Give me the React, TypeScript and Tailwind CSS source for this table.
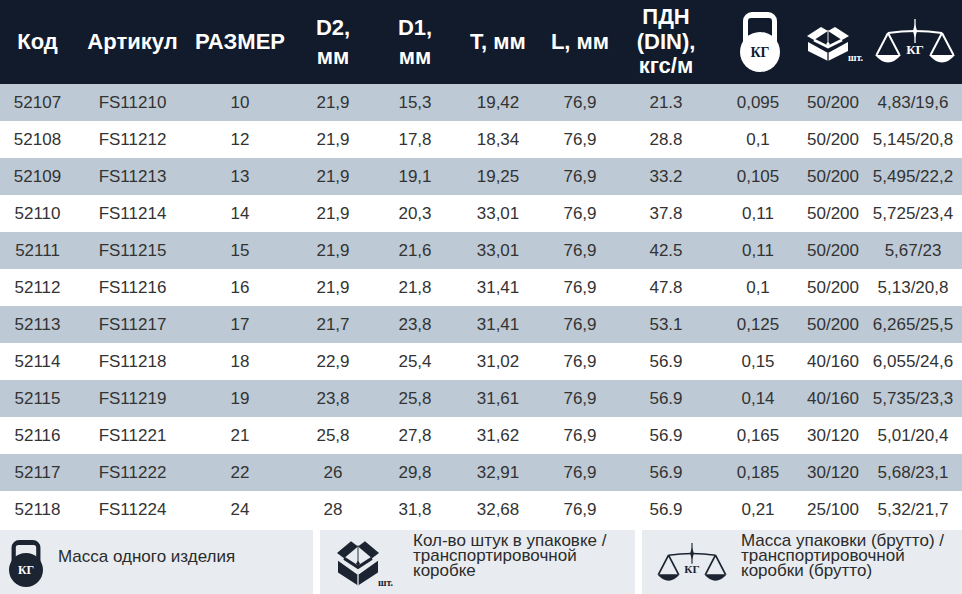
import React from "react";

const rows = [
  ["52107", "FS11210", "10", "21,9", "15,3", "19,42", "76,9", "21.3", "0,095", "50/200", "4,83/19,6"],
  ["52108", "FS11212", "12", "21,9", "17,8", "18,34", "76,9", "28.8", "0,1", "50/200", "5,145/20,8"],
  ["52109", "FS11213", "13", "21,9", "19,1", "19,25", "76,9", "33.2", "0,105", "50/200", "5,495/22,2"],
  ["52110", "FS11214", "14", "21,9", "20,3", "33,01", "76,9", "37.8", "0,11", "50/200", "5,725/23,4"],
  ["52111", "FS11215", "15", "21,9", "21,6", "33,01", "76,9", "42.5", "0,11", "50/200", "5,67/23"],
  ["52112", "FS11216", "16", "21,9", "21,8", "31,41", "76,9", "47.8", "0,1", "50/200", "5,13/20,8"],
  ["52113", "FS11217", "17", "21,7", "23,8", "31,41", "76,9", "53.1", "0,125", "50/200", "6,265/25,5"],
  ["52114", "FS11218", "18", "22,9", "25,4", "31,02", "76,9", "56.9", "0,15", "40/160", "6,055/24,6"],
  ["52115", "FS11219", "19", "23,8", "25,8", "31,61", "76,9", "56.9", "0,14", "40/160", "5,735/23,3"],
  ["52116", "FS11221", "21", "25,8", "27,8", "31,62", "76,9", "56.9", "0,165", "30/120", "5,01/20,4"],
  ["52117", "FS11222", "22", "26", "29,8", "32,91", "76,9", "56.9", "0,185", "30/120", "5,68/23,1"],
  ["52118", "FS11224", "24", "28", "31,8", "32,68", "76,9", "56.9", "0,21", "25/100", "5,32/21,7"],
];

const widths = ["w-[75px]", "w-[115px]", "w-[100px]", "w-[86px]", "w-[78px]", "w-[88px]", "w-[76px]", "w-[96px]", "w-[88px]", "w-[62px]", "w-[98px]"];

const serif = "'Liberation Serif', 'Times New Roman', serif";

function Kettle({ w, h, color, ink }: { w: number; h: number; color: string; ink: string }) {
  const H = (40 * h) / w;
  const cy = H - 20;
  return (
    <svg width={w} height={h} viewBox={`0 0 40 ${H}`}>
      <path
        fillRule="evenodd"
        fill={color}
        d={`M12 0 H28 A9 9 0 0 1 37 9 V${cy} H3 V9 A9 9 0 0 1 12 0 Z M11 6 A3 3 0 0 0 8 9 V${cy - 6} H32 V9 A3 3 0 0 0 29 6 Z`}
      />
      <circle cx="20" cy={cy} r="20" fill={color} />
      <text x="20" y={cy + 5} textAnchor="middle" fontFamily={serif} fontWeight="bold" fontSize="14" fill={ink}>
        КГ
      </text>
    </svg>
  );
}

// open carton with the "шт." mark; sy stretches the carton only
function Box({ w, sy, color, gap }: { w: number; sy: number; color: string; gap: string }) {
  const H = 35 * sy + 1;
  return (
    <svg width={w} height={(w * H) / 56} viewBox={`0 0 56 ${H}`}>
      <g transform={`scale(1 ${sy})`}>
        <polygon points="0,10 14,1 21,5 7,14" fill={color} />
        <polygon points="28,1 42,10 35,14 21,5" fill={color} />
        <polygon points="1,16 21,27 41,16 41,25 21,35 1,25" fill={color} />
        <line x1="21" y1="27" x2="21" y2="35" stroke={gap} strokeWidth="1.3" />
        <path d="M7 14 L21 21 L35 14" fill="none" stroke={color} strokeWidth="2.6" />
        <line x1="21" y1="4" x2="21" y2="17" stroke={color} strokeWidth="0.9" />
        <polygon points="21,16 23,18 21,20 19,18" fill={color} />
      </g>
      <text x="41" y={H - 1} fontFamily={serif} fontWeight="bold" fontSize="10" fill={color}>
        шт.
      </text>
    </svg>
  );
}

function Scale({ w, h, color }: { w: number; h: number; color: string }) {
  return (
    <svg width={w} height={h} viewBox="0 0 80 46">
      <path d="M13 14 Q40 10 67 14" fill="none" stroke={color} strokeWidth="1.8" />
      <line x1="40" y1="0" x2="40" y2="24" stroke={color} strokeWidth="1.3" />
      <polygon points="40,5 42.2,12 40,19 37.8,12" fill={color} />
      <path d="M13 14 L1.5 36 M13 14 L24.5 36" stroke={color} strokeWidth="2" fill="none" />
      <path d="M0 36 Q13 51 26 36 Z" fill={color} />
      <path d="M67 14 L55.5 36 M67 14 L78.5 36" stroke={color} strokeWidth="2" fill="none" />
      <path d="M54 36 Q67 51 80 36 Z" fill={color} />
      <text x="40" y="35" textAnchor="middle" fontFamily={serif} fontWeight="bold" fontSize="13" fill={color}>
        КГ
      </text>
    </svg>
  );
}

export default function App() {
  const dark = "#111b2b";
  const ink = "#1c2431";

  return (
    <div className="w-[962px] h-[594px] overflow-hidden bg-white font-['Liberation_Sans',Arial,sans-serif]">
      <table className="w-[962px] table-fixed border-collapse">
        <colgroup>
          {widths.map((w) => (
            <col key={w} className={w} />
          ))}
        </colgroup>
        <thead>
          <tr className="h-[84px] bg-[#111b2b] text-white text-[22px] font-bold">
            <th className="p-0 text-center align-middle leading-[24px]">Код</th>
            <th className="p-0 text-center align-middle leading-[24px]">Артикул</th>
            <th className="p-0 text-center align-middle leading-[24px] whitespace-nowrap">РАЗМЕР</th>
            <th className="p-0 text-center align-middle leading-[29px]">
              D2,
              <br />
              мм
            </th>
            <th className="p-0 text-center align-middle leading-[29px]">
              D1,
              <br />
              мм
            </th>
            <th className="p-0 text-center align-middle leading-[24px] whitespace-nowrap">T, мм</th>
            <th className="p-0 text-center align-middle leading-[24px] whitespace-nowrap">L, мм</th>
            <th className="p-0 text-center align-middle leading-[24.5px]">
              ПДН
              <br />
              (DIN),
              <br />
              кгс/м
            </th>
            <th className="p-0 align-middle">
              <div className="flex justify-center pl-[4px]">
                <Kettle w={40} h={60} color="#ffffff" ink={dark} />
              </div>
            </th>
            <th className="p-0 align-middle">
              <div className="flex justify-start pl-[5px] pt-[4px]">
                <Box w={56} sy={1} color="#ffffff" gap={dark} />
              </div>
            </th>
            <th className="p-0 align-middle">
              <div className="flex justify-start pl-[11px]">
                <Scale w={80} h={46} color="#ffffff" />
              </div>
            </th>
          </tr>
        </thead>
        <tbody>
          {rows.map((r, i) => (
            <tr key={r[0]} className={`h-[37px] text-[17px] text-[#333333] ${i % 2 === 0 ? "bg-[#bdc9d4]" : "bg-white"}`}>
              {r.map((c, j) => (
                <td key={j} className="p-0 text-center align-middle whitespace-nowrap">
                  {c}
                </td>
              ))}
            </tr>
          ))}
        </tbody>
      </table>

      <div className="mt-[2px] flex h-[64px] gap-[7px] text-[17px] text-[#2b2b2b]">
        <div className="flex w-[313px] items-start bg-[#e8ecf0] pl-[9px] pt-[10px]">
          <Kettle w={34} h={47} color={ink} ink="#ffffff" />
          <div className="ml-[15px] mt-[7px] leading-[20px]">Масса одного изделия</div>
        </div>
        <div className="flex w-[315px] items-start bg-[#e8ecf0] pl-[17px] pt-[10px]">
          <Box w={56} sy={1.3} color={ink} gap="#e8ecf0" />
          <div className="ml-[20px] -mt-[7px] leading-[15px]">
            Кол-во штук в упаковке /
            <br />
            транспортировочной
            <br />
            коробке
          </div>
        </div>
        <div className="flex flex-1 items-start bg-[#e8ecf0] pl-[15px] pt-[13px]">
          <Scale w={70} h={40} color={ink} />
          <div className="ml-[14px] -mt-[10px] leading-[15px]">
            Масса упаковки (брутто) /
            <br />
            транспортировочной
            <br />
            коробки (брутто)
          </div>
        </div>
      </div>
    </div>
  );
}
